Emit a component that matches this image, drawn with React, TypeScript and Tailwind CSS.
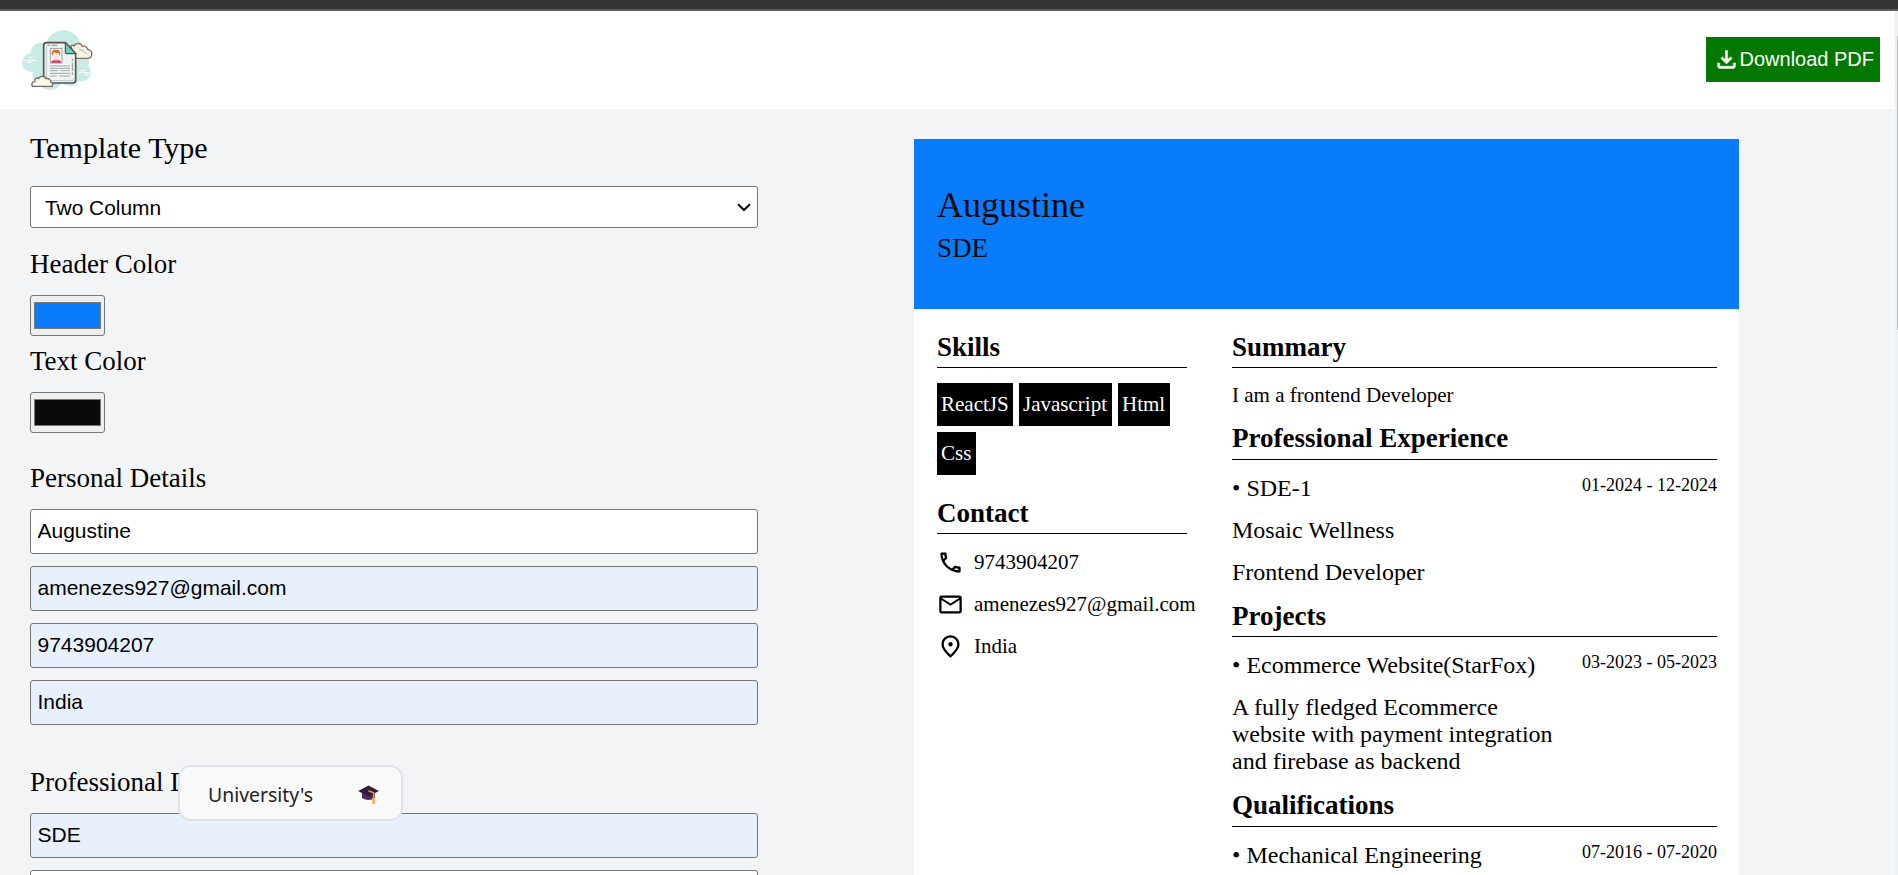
import type { ReactNode } from "react";
import { MdOutlineEmail, MdOutlineLocalPhone } from "react-icons/md";

function Logo() {
  return (
    <svg className="mb-px h-[63px] w-[75px]" viewBox="60 84 225 189" fill="none">
      <g fill="#c8ece5">
        <circle cx="190" cy="145" r="54" />
        <circle cx="124" cy="160" r="32" />
        <circle cx="94" cy="188" r="28" />
        <circle cx="235" cy="185" r="32" />
        <circle cx="246" cy="217" r="27" />
        <circle cx="150" cy="230" r="40" />
        <circle cx="209" cy="222" r="36" />
        <rect x="98" y="150" width="150" height="90" />
      </g>
      <g stroke="#ffffff" strokeWidth="3">
        <path d="M66 181h14M84 181h20M88 172h10M80 187h14M98 181h12M236 218h10M250 218h22M242 212h12M254 224h14" />
      </g>
      <path
        d="M212 138c4-3 8-3 11 0c1-9 19-11 24 1c8-2 15 2 16 9c17 3 16 25 0 27h-36z"
        fill="#fbf5e6"
        stroke="#7f706c"
        strokeWidth="4"
        strokeLinejoin="round"
      />
      <path d="M238 147c4 5 12 3 15 8s6 3 9 7" stroke="#8b7f78" strokeWidth="2" />
      <path
        d="M140 128h56l31 33v79q0 9-9 9h-78q-9 0-9-9v-103q0-9 9-9z"
        fill="#edf5f4"
        stroke="#5d4f50"
        strokeWidth="5"
        strokeLinejoin="round"
      />
      <path d="M139 137v98q0 7 7 7h68q6 0 6-7" stroke="#b9cbc9" strokeWidth="3" />
      <path d="M196 128v27q0 6 6 6h25z" fill="#6fcfc6" stroke="#5d4f50" strokeWidth="3.5" strokeLinejoin="round" />
      <path d="M142 136h8M154 136h18M217 176v8M217 189v24M217 217v8" stroke="#7d7777" strokeWidth="2.5" />
      <rect x="151" y="145" width="35" height="44" fill="#f6f4f1" stroke="#9b9492" strokeWidth="2.5" />
      <path d="M152 188q3-7 12-8h10q9 1 11 8z" fill="#d8336f" />
      <path d="M163 171h11v9q-6 4-11 0z" fill="#f3d5c2" />
      <ellipse cx="168" cy="167" rx="9" ry="11" fill="#f9e6d8" />
      <path d="M157 168c-6-15 3-20 11-19c12-1 15 8 11 19l-3-9c-5 0-11 0-15-3c-1 4-3 6-4 12z" fill="#c97338" />
      <path
        d="M150 198h60M150 205h60M150 212h24M182 212h28M150 220h60M150 228h20M178 228h32"
        stroke="#9b9b9b"
        strokeWidth="2.6"
      />
      <path
        d="M98 259c-6-8 0-15 7-14c-3-8 5-14 11-9c3-9 18-10 22 0c8-2 15 3 14 10c8 2 8 9 4 13z"
        fill="#fdf9e9"
        stroke="#77696a"
        strokeWidth="4"
        strokeLinejoin="round"
      />
    </svg>
  );
}

function DownloadIcon() {
  return (
    <svg className="size-[27px] shrink-0" viewBox="0 0 24 24" fill="#fff" stroke="#fff" strokeWidth="0.4">
      <path d="M18 15v3H6v-3H4v3c0 1.100.9 2 2 2h12c1.100 0 2-.9 2-2v-3h-2zm-1-4-1.410-1.410L13 12.170V4h-2v8.170L8.410 9.590 7 11l5 5 5-5z" />
    </svg>
  );
}

function LocationIcon() {
  return (
    <svg className="size-[27px] shrink-0" viewBox="0 0 24 24" fill="currentColor">
      <path d="M12 12c-1.100 0-2-.9-2-2s.9-2 2-2 2 .9 2 2-.9 2-2 2zm6-1.800C18 6.570 15.350 4 12 4s-6 2.570-6 6.200c0 2.340 1.950 5.440 6 9.140 4.050-3.700 6-6.800 6-9.140zM12 2c4.200 0 8 3.220 8 8.200 0 3.320-2.670 7.250-8 11.800-5.330-4.550-8-8.480-8-11.800C4 5.220 7.800 2 12 2z" />
    </svg>
  );
}

function GraduationCap() {
  return (
    <svg className="h-5 w-[21px]" viewBox="0 0 21 20" fill="none">
      <path d="M4 7v6q6.500 4 13 0v-6z" fill="#4a2d5c" />
      <path d="M10.500.6L20.800 6L10.500 11.400L.2 6z" fill="#2f1c3e" />
      <path d="M10.500 5.700l5.200 2.200v9.600" stroke="#f5a02c" strokeWidth="1.500" />
      <path d="M14.300 13h2.800v6h-2.800z" fill="#fbb040" />
    </svg>
  );
}

function Label({ children, className = "" }: { children: ReactNode; className?: string }) {
  return <h2 className={`text-[27px] leading-[30px] ${className}`}>{children}</h2>;
}

function Field({ value, filled }: { value: string; filled?: boolean }) {
  return (
    <input
      readOnly
      value={value}
      className={`h-[45px] w-full shrink-0 rounded-[3px] border border-[#767676] px-[6.5px] pb-[2px] font-['Liberation_Sans',sans-serif] text-[21px] outline-none ${
        filled ? "bg-[#e8f0fe]" : "bg-white"
      }`}
    />
  );
}

function Swatch({ color, className = "" }: { color: string; className?: string }) {
  return (
    <button
      className={`block h-[41px] w-[75px] rounded-[3px] border border-[#767676] bg-[#efefef] px-[3px] py-[6px] ${className}`}
    >
      <span className={`block h-full w-full border border-[#777] ${color}`} />
    </button>
  );
}

function Heading({ children, className = "" }: { children: ReactNode; className?: string }) {
  return (
    <h3 className={`border-b border-black text-[27px] leading-[30px] font-bold ${className}`}>{children}</h3>
  );
}

function Chip({ children, className }: { children: ReactNode; className: string }) {
  return (
    <span className={`block h-[43px] bg-black pt-[9px] pl-1 text-[21px] leading-6 text-white ${className}`}>
      {children}
    </span>
  );
}

function Entry({ title, dates }: { title: string; dates: string }) {
  return (
    <div className="mt-[15px] flex justify-between text-[24px] leading-[27px]">
      <p>• {title}</p>
      <p className="text-[18px] leading-5">{dates}</p>
    </div>
  );
}

function Contact({ icon, children }: { icon: ReactNode; children: ReactNode }) {
  return (
    <div className="-ml-[0.5px] flex h-[27px] items-center gap-[10.5px] text-[21px] leading-6 whitespace-nowrap">
      {icon}
      <span className="mb-px">{children}</span>
    </div>
  );
}

export default function App() {
  return (
    <div className="relative flex h-[875px] w-[1898px] flex-col overflow-hidden bg-[#f3f4f6] font-['Liberation_Serif',serif] text-black">
      <div className="h-[11px] shrink-0 border-b-2 border-[#605e5e] bg-[#333]" />
      <div className="flex min-h-0 grow">
        <div className="flex w-[1895px] flex-col">
          <header className="flex h-[98px] shrink-0 items-center justify-between bg-white pr-[15px] pl-5">
            <Logo />
            <button className="mb-px flex h-[45px] w-[174px] items-center bg-[#037800] pl-[6.5px] font-['Liberation_Sans',sans-serif] text-[20px] whitespace-nowrap text-white">
              <DownloadIcon />
              <span className="mb-[2px]">Download PDF</span>
            </button>
          </header>

          <main className="flex min-h-0 grow overflow-hidden">
            <section className="ml-[30px] flex w-[728px] flex-col">
              <h2 className="mt-[22px] text-[30px] leading-[34px]">Template Type</h2>
              <div className="mt-[21px] flex h-[42px] shrink-0 items-center justify-between rounded-[3px] border border-[#767676] bg-white pr-[6px] pl-[14px] font-['Liberation_Sans',sans-serif] text-[20.9px]">
                <span className="mt-[2px]">Two Column</span>
                <svg className="h-[9px] w-[14px]" viewBox="0 0 14 9" fill="none">
                  <path d="M1 1.300l6 5.700l6-5.700" stroke="#111" strokeWidth="2.200" />
                </svg>
              </div>
              <Label className="mt-[21px]">Header Color</Label>
              <Swatch className="mt-4 shrink-0" color="bg-[#087cfa]" />
              <Label className="mt-[10px]">Text Color</Label>
              <Swatch className="mt-4 shrink-0" color="bg-[#0a0a0a]" />
              <Label className="mt-[30px]">Personal Details</Label>
              <div className="mt-4 flex flex-col gap-3">
                <Field value="Augustine" />
                <Field value="amenezes927@gmail.com" filled />
                <Field value="9743904207" filled />
                <Field value="India" filled />
              </div>
              <Label className="mt-[42px]">Professional Details</Label>
              <div className="mt-4 flex flex-col gap-3">
                <Field value="SDE" filled />
                <Field value="" />
              </div>
            </section>

            <article className="mt-[30px] ml-[156px] w-[825px] bg-white">
              <div className="h-[170px] bg-[#087cfa] pt-[45px] pl-[23px] text-[#0a0a0a]">
                <p className="text-[36px] leading-[42px]">Augustine</p>
                <p className="mt-[7px] text-[27px] leading-[30px]">SDE</p>
              </div>
              <div className="flex justify-between pt-[23px] pr-[22px] pl-[23px]">
                <div className="w-[250px]">
                  <Heading className="pb-[5px]">Skills</Heading>
                  <div className="mt-[15px] flex flex-wrap gap-[6px]">
                    <Chip className="w-[76px]">ReactJS</Chip>
                    <Chip className="w-[93px]">Javascript</Chip>
                    <Chip className="w-[52px]">Html</Chip>
                    <Chip className="w-[39px]">Css</Chip>
                  </div>
                  <Heading className="mt-[23px] pb-[5px]">Contact</Heading>
                  <div className="mt-[15px] flex flex-col gap-[15px]">
                    <Contact icon={<MdOutlineLocalPhone className="size-[27px] shrink-0" />}>9743904207</Contact>
                    <Contact icon={<MdOutlineEmail className="size-[27px] shrink-0" />}>
                      amenezes927@gmail.com
                    </Contact>
                    <Contact icon={<LocationIcon />}>India</Contact>
                  </div>
                </div>
                <div className="w-[485px]">
                  <Heading className="pb-[5px]">Summary</Heading>
                  <p className="mt-[15px] text-[21px] leading-6">I am a frontend Developer</p>
                  <Heading className="mt-4 pb-[6px]">Professional Experience</Heading>
                  <Entry title="SDE-1" dates="01-2024 - 12-2024" />
                  <p className="mt-[15px] text-[24px] leading-[27px]">Mosaic Wellness</p>
                  <p className="mt-[15px] text-[24px] leading-[27px]">Frontend Developer</p>
                  <Heading className="mt-[15px] pb-[5px]">Projects</Heading>
                  <Entry title="Ecommerce Website(StarFox)" dates="03-2023 - 05-2023" />
                  <p className="mt-[15px] w-[326px] text-[24px] leading-[27px]">
                    A fully fledged Ecommerce website with payment integration and firebase as backend
                  </p>
                  <Heading className="mt-[15px] pb-[6px]">Qualifications</Heading>
                  <Entry title="Mechanical Engineering" dates="07-2016 - 07-2020" />
                </div>
              </div>
            </article>
          </main>
        </div>
        <div className="flex w-[3px] justify-end bg-[#f0f0f0] pt-[25px]">
          <div className="h-[294px] w-px bg-[#bdbdbd]" />
        </div>
      </div>

      <div className="absolute top-[765px] left-[178px] flex h-[56px] w-[225px] items-center justify-between rounded-[13px] border-2 border-[#dfe3ea] bg-[#f9f9f9] pr-[22px] pl-7 font-['Noto_Sans',sans-serif] text-[19.4px] text-[#222]">
        <span className="mt-[4px]">University's</span>
        <span className="mt-[3px]">
          <GraduationCap />
        </span>
      </div>
    </div>
  );
}
